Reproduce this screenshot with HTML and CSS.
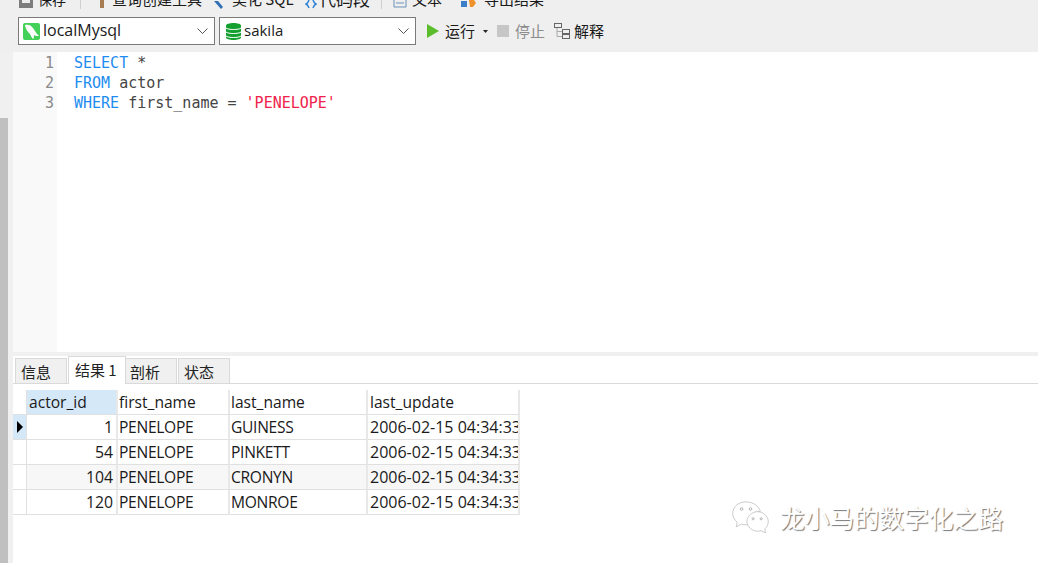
FILE: index.html
```html
<!DOCTYPE html>
<html lang="zh">
<head>
<meta charset="utf-8">
<title>Navicat</title>
<link rel="stylesheet" href="styles.css">
</head>
<body>
<div class="page">
  <header class="toolbar">
    <div class="tools">
      <span class="tool t-save"><svg width="16" height="16" viewBox="0 0 16 16"><path d="M1 0h14v8H1z" fill="#7d7d7d"/><rect x="4" y="0" width="8" height="3" fill="#eee"/></svg><span>保存</span></span>
      <i class="sep s1"></i>
      <span class="tool t-build"><svg width="10" height="16" viewBox="0 0 10 16"><path d="M3 0h4v8H3z" fill="#a67c52"/></svg><span>查询创建工具</span></span>
      <span class="tool t-beauty"><svg width="16" height="16" viewBox="0 0 16 16"><path d="M2 1l4 0 5 6-2 2z" fill="#2f6fb5"/></svg><span>美化 SQL</span></span>
      <span class="tool t-snip"><svg width="12" height="16" viewBox="0 0 12 16"><path d="M4 0C3 2 3 3 1 4c2 1 2 2 3 4M8 0c1 2 1 3 3 4-2 1-2 2-3 4" stroke="#2a7fd6" stroke-width="1.500" fill="none"/></svg><span>代码段</span></span>
      <i class="sep s2"></i>
      <span class="tool t-text"><svg width="14" height="16" viewBox="0 0 14 16"><path d="M1 0v7h12V0" fill="none" stroke="#6a8fb8"/><path d="M3 3h8" stroke="#6a8fb8"/></svg><span>文本</span></span>
      <span class="tool t-export"><svg width="16" height="16" viewBox="0 0 16 16"><rect x="0" y="1" width="6" height="6" fill="#3b7fc9"/><path d="M8 0h5l2 3-3 4H9z" fill="#f0922b"/></svg><span>导出结果</span></span>
    </div>
    <div class="actions">
      <div class="combo combo-conn">
        <svg class="combo-icon" width="17" height="17" viewBox="0 0 17 17"><rect width="17" height="17" rx="2" fill="#43d15a"/><path d="M2 2c3-1 6 0 8 3 2 3 3 5 6 8-2 0-4 0-5-1 0 2 0 3-1 4-1-1-2-3-3-5C5 9 3 7 2 2z" fill="#fff"/></svg>
        <span class="combo-label">localMysql</span>
        <svg class="chev" width="11" height="6" viewBox="0 0 11 6"><path d="M.5.5l5 5 5-5" fill="none" stroke="#555"/></svg>
      </div>
      <div class="combo combo-db">
        <svg class="combo-icon" width="15" height="17" viewBox="0 0 15 17"><path d="M0 2.500C0 1 3.500 0 7.500 0S15 1 15 2.500v12C15 16 11.500 17 7.500 17S0 16 0 14.500z" fill="#14a02e"/><path d="M0 5c2 2 13 2 15 0M0 9c2 2 13 2 15 0M0 13c2 2 13 2 15 0" fill="none" stroke="#fff" stroke-width="1"/></svg>
        <span class="combo-label">sakila</span>
        <svg class="chev" width="11" height="6" viewBox="0 0 11 6"><path d="M.5.5l5 5 5-5" fill="none" stroke="#555"/></svg>
      </div>
      <span class="act a-run"><svg width="12" height="14" viewBox="0 0 12 14"><path d="M0 0l12 7-12 7z" fill="#5bbd2b"/></svg><span>运行</span></span>
      <svg class="caret" width="5" height="3" viewBox="0 0 5 3"><path d="M0 0h5L2.500 3z" fill="#222"/></svg>
      <span class="act a-stop"><i class="stop-box"></i><span>停止</span></span>
      <span class="act a-explain"><svg width="16" height="16" viewBox="0 0 16 16" fill="none" stroke="#666"><rect x=".5" y=".5" width="7" height="4"/><rect x="8.500" y="6.500" width="7" height="4"/><rect x="8.500" y="11.500" width="7" height="4"/><path d="M3 5v8.500h5M3 8.500h5" stroke="#aaa"/></svg><span>解释</span></span>
    </div>
  </header>

  <div class="workspace">
    <div class="rail"><div class="thumb"></div></div>
    <main class="content">
      <section class="editor">
        <div class="gutter">
          <div>1</div><div>2</div><div>3</div>
        </div>
        <pre class="code"><span class="kw">SELECT</span> *
<span class="kw">FROM</span> actor
<span class="kw">WHERE</span> first_name = <span class="str">'PENELOPE'</span></pre>
      </section>
      <div class="divider"></div>
      <nav class="tabs">
        <span class="tab t1">信息</span>
        <span class="tab active">结果 1</span>
        <span class="tab t3">剖析</span>
        <span class="tab t4">状态</span>
      </nav>
      <section class="results">
        <div class="grid">
          <div class="corner"></div>
          <div class="hcell selected first">actor_id</div>
          <div class="hcell">first_name</div>
          <div class="hcell">last_name</div>
          <div class="hcell last">last_update</div>

          <div class="rowhead selected"><svg width="6" height="12" viewBox="0 0 6 12"><path d="M0 0l6 6-6 6z" fill="#000"/></svg></div>
          <div class="cell num">1</div><div class="cell">PENELOPE</div><div class="cell">GUINESS</div><div class="cell last date">2006-02-15 04:34:33</div>

          <div class="rowhead"></div>
          <div class="cell num">54</div><div class="cell">PENELOPE</div><div class="cell">PINKETT</div><div class="cell last date">2006-02-15 04:34:33</div>

          <div class="rowhead"></div>
          <div class="cell num alt">104</div><div class="cell alt">PENELOPE</div><div class="cell alt">CRONYN</div><div class="cell alt last date">2006-02-15 04:34:33</div>

          <div class="rowhead"></div>
          <div class="cell num">120</div><div class="cell">PENELOPE</div><div class="cell">MONROE</div><div class="cell last date">2006-02-15 04:34:33</div>
        </div>
      </section>
    </main>
  </div>

  <div class="watermark">
    <svg width="41" height="32" viewBox="0 0 42 36" fill="#fff" stroke="#c4c4c4" stroke-width="1">
      <path d="M16 1C7 1 1 7 1 14c0 4 2 7 5 10l-1 5 6-3c2 .6 3 .8 5 .8 1 0 2 0 3-.2C18 17 25 11 32 12 31 6 24 1 16 1z"/>
      <path d="M41 23c0-6-6-11-12-11S17 17 17 23s6 11 12 11c1.500 0 3-.3 4-.6l5 2.600-1-4.500c2.500-2 4-5 4-8.500z"/>
      <circle cx="11" cy="9" r="1.500" stroke="#aaa"/><circle cx="21" cy="9" r="1.500" stroke="#aaa"/>
      <circle cx="24" cy="20" r="1.200" stroke="#aaa"/><circle cx="33" cy="20" r="1.200" stroke="#aaa"/>
    </svg>
    <span>龙小马的数字化之路</span>
  </div>
</div>
</body>
</html>
```

FILE: styles.css
```css
* { box-sizing: border-box; }
html, body { margin: 0; padding: 0; }
body {
  background: #fff;
  font-family: "Open Sans", "Noto Sans CJK SC", sans-serif;
  font-size: 15px;
  color: #1a1a1a;
}
.page {
  position: relative;
  width: 1038px;
  height: 563px;
  overflow: hidden;
  display: flex;
  flex-direction: column;
}

/* toolbar */
.toolbar {
  height: 52px;
  background: #efefef;
  flex: none;
}
.tools {
  height: 9px;
  display: flex;
  align-items: flex-start;
  padding-left: 18px;
  overflow: hidden;
}
.tool {
  display: flex;
  align-items: flex-start;
  height: 20px;
  margin-top: -11px;
  line-height: 20px;
  white-space: nowrap;
  font-family: "Noto Sans CJK SC", sans-serif;
}
.tool svg { margin-top: 11px; flex: none; }
.t-save { gap: 4px; width: 62px; font-size: 14px; }
.s1 { margin-right: 16px; }
.sep { width: 1px; height: 9px; background: #cfcfcf; flex: none; }
.t-build { gap: 5px; width: 115px; }
.t-beauty { gap: 4px; width: 93px; }
.t-snip { gap: 2px; width: 76px; font-size: 17px; }
.s2 { margin-right: 11px; }
.t-text { gap: 5px; width: 68px; }
.t-export { gap: 7px; }

.actions {
  display: flex;
  align-items: center;
  height: 28px;
  margin-top: 8px;
  padding-left: 18px;
}
.combo {
  width: 197px;
  height: 28px;
  margin-right: 4px;
  background: #fff;
  border: 1px solid #7a7a7a;
  display: flex;
  align-items: center;
  padding: 0 6px 0 5px;
  flex: none;
}
.combo-conn { padding-left: 4px; }
.combo-icon { flex: none; margin-right: 3px; }
.combo-label { flex: 1; font-size: 15px; line-height: 20px; margin-top: -2px; }
.combo-conn .combo-label { font-size: 16px; }
.combo-db .combo-icon { margin-left: 1px; }
.chev { flex: none; }
.act {
  display: flex;
  align-items: center;
  font-family: "Noto Sans CJK SC", sans-serif;
  font-size: 15px;
  white-space: nowrap;
}
.act span { margin-top: -2px; }
.a-run { gap: 6px; margin-left: 7px; }
.caret { margin-left: 8px; flex: none; }
.a-stop { gap: 6px; margin-left: 9px; color: #8c8c8c; }
.stop-box { width: 12px; height: 12px; background: #c6c6c6; display: block; }
.a-explain { gap: 4px; margin-left: 9px; }

/* body */
.workspace { flex: 1; display: flex; min-height: 0; }
.rail {
  width: 13px;
  flex: none;
  background: #f0f0f0;
  padding-top: 66px;
  padding-right: 5px;
  display: flex;
}
.thumb { flex: 1; background: #c0c0c0; }
.content { flex: 1; display: flex; flex-direction: column; min-width: 0; }

.editor { height: 300px; display: flex; flex: none; background: #fff; padding: 0; }
.gutter {
  width: 44px;
  padding: 1px 3px 0 0;
  background: #f9f9f9;
  font-family: "DejaVu Sans Mono", monospace;
  font-size: 15px;
  line-height: 20px;
  color: #8a8a8a;
  text-align: right;
}
.code {
  margin: 0;
  padding: 1px 0 0 17px;
  font-family: "DejaVu Sans Mono", monospace;
  font-size: 15px;
  line-height: 20px;
  color: #444;
}
.kw { color: #1e8cf0; }
.str { color: #f0224a; }
.divider { height: 4px; background: #f0f0f0; flex: none; }

.tabs {
  height: 28px;
  flex: none;
  display: flex;
  align-items: flex-end;
  padding-left: 2px;
  border-bottom: 1px solid #d9d9d9;
  font-family: "Noto Sans CJK SC", sans-serif;
  font-size: 15px;
}
.tab {
  height: 25px;
  line-height: 25px;
  background: #f0f0f0;
  border: 1px solid #d9d9d9;
  border-bottom: 0;
  flex: none;
  color: #222;
}
.t1 { width: 52px; margin-right: 1px; padding-left: 5px; }
.active {
  width: 58px;
  height: 28px;
  line-height: 25px;
  background: #fff;
  margin-bottom: -1px;
  padding-left: 6px;
  position: relative;
}
.t3 { width: 51px; margin-right: 1px; border-left: 0; padding-left: 4px; }
.t4 { width: 52px; padding-left: 5px; }

.results { flex: 1; padding-top: 6px; }
.grid {
  display: grid;
  width: 507px;
  grid-template-columns: 14px 91px 112px 138px 152px;
  grid-template-rows: repeat(5, 25px);
  font-size: 15.600px;
  line-height: 25px;
  color: #1a1a1a;
}
.corner, .hcell, .rowhead, .cell {
  border-right: 2px solid #e8e8e8;
  border-bottom: 1px solid #e0e0e0;
  white-space: nowrap;
  overflow: hidden;
}
.corner { border-right: 1px solid #e0e0e0; }
.rowhead { border-right: 1px solid #e0e0e0; display: flex; align-items: center; padding-left: 4px; }
.hcell { padding-left: 1px; }
.cell { padding-left: 1px; padding-right: 3px; letter-spacing: -.3px; }
.hcell.first { padding-left: 2px; }
.hcell.last, .cell.last { padding-left: 2px; }
.date { font-size: 16px; letter-spacing: 0; }
.num { text-align: right; font-size: 15.800px; letter-spacing: 0; }
.selected { background: #d5e8f8; }
.alt { background: #f7f7f7; }

/* watermark */
.watermark {
  position: absolute;
  left: 730px;
  top: 499px;
  display: flex;
  align-items: center;
  gap: 9px;
  font-family: "Noto Sans CJK SC", sans-serif;
  font-size: 24.800px;
  line-height: 36px;
  color: #fff;
  text-shadow: 1px 1px 1px #777;
}
```
